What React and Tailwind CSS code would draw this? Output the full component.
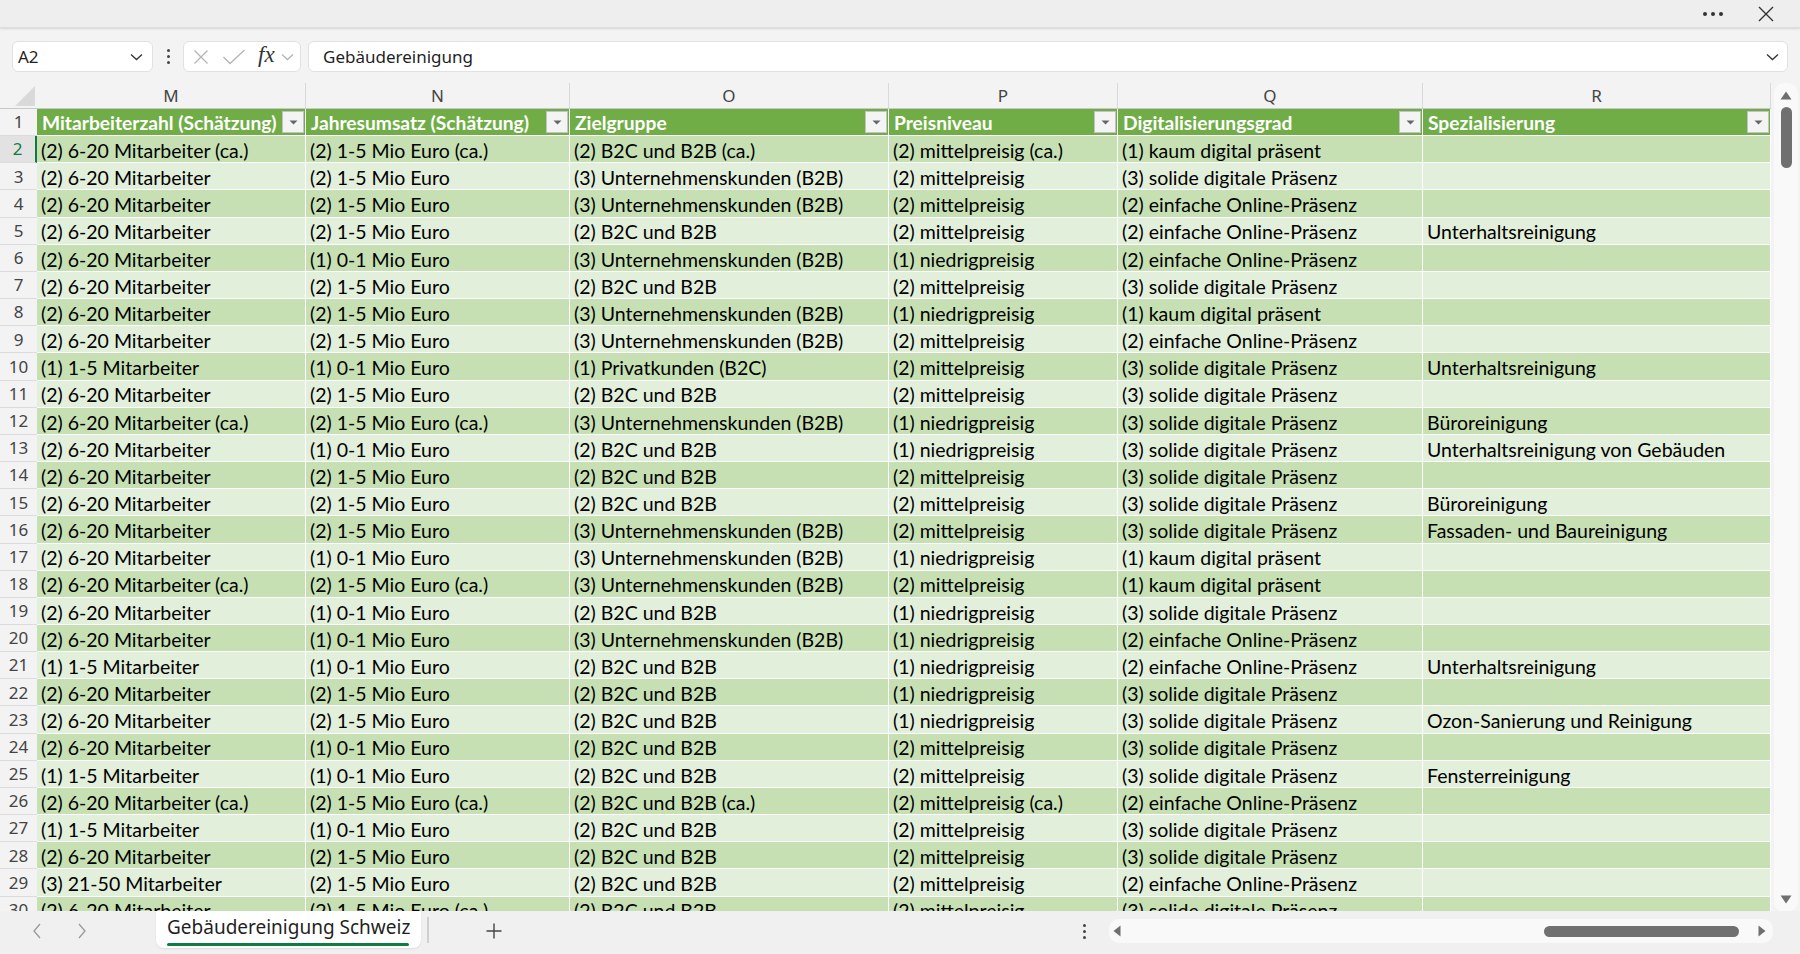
import React from "react";

const COLS = [
  { w: "w-[269px]", L: "M", h: "Mitarbeiterzahl (Schätzung)" },
  { w: "w-[264px]", L: "N", h: "Jahresumsatz (Schätzung)" },
  { w: "w-[319px]", L: "O", h: "Zielgruppe" },
  { w: "w-[229px]", L: "P", h: "Preisniveau" },
  { w: "w-[305px]", L: "Q", h: "Digitalisierungsgrad" },
  { w: "w-[348px]", L: "R", h: "Spezialisierung" },
];

const M1 = "(2) 6-20 Mitarbeiter";
const M1c = "(2) 6-20 Mitarbeiter (ca.)";
const M2 = "(1) 1-5 Mitarbeiter";
const M3 = "(3) 21-50 Mitarbeiter";
const N1 = "(2) 1-5 Mio Euro";
const N1c = "(2) 1-5 Mio Euro (ca.)";
const N0 = "(1) 0-1 Mio Euro";
const O1 = "(2) B2C und B2B";
const O1c = "(2) B2C und B2B (ca.)";
const OU = "(3) Unternehmenskunden (B2B)";
const OP = "(1) Privatkunden (B2C)";
const P2 = "(2) mittelpreisig";
const P2c = "(2) mittelpreisig (ca.)";
const P1 = "(1) niedrigpreisig";
const QK = "(1) kaum digital präsent";
const QS = "(3) solide digitale Präsenz";
const QE = "(2) einfache Online-Präsenz";

const ROWS = [
  [M1c, N1c, O1c, P2c, QK, ""],
  [M1, N1, OU, P2, QS, ""],
  [M1, N1, OU, P2, QE, ""],
  [M1, N1, O1, P2, QE, "Unterhaltsreinigung"],
  [M1, N0, OU, P1, QE, ""],
  [M1, N1, O1, P2, QS, ""],
  [M1, N1, OU, P1, QK, ""],
  [M1, N1, OU, P2, QE, ""],
  [M2, N0, OP, P2, QS, "Unterhaltsreinigung"],
  [M1, N1, O1, P2, QS, ""],
  [M1c, N1c, OU, P1, QS, "Büroreinigung"],
  [M1, N0, O1, P1, QS, "Unterhaltsreinigung von Gebäuden"],
  [M1, N1, O1, P2, QS, ""],
  [M1, N1, O1, P2, QS, "Büroreinigung"],
  [M1, N1, OU, P2, QS, "Fassaden- und Baureinigung"],
  [M1, N0, OU, P1, QK, ""],
  [M1c, N1c, OU, P2, QK, ""],
  [M1, N0, O1, P1, QS, ""],
  [M1, N0, OU, P1, QE, ""],
  [M2, N0, O1, P1, QE, "Unterhaltsreinigung"],
  [M1, N1, O1, P1, QS, ""],
  [M1, N1, O1, P1, QS, "Ozon-Sanierung und Reinigung"],
  [M1, N0, O1, P2, QS, ""],
  [M2, N0, O1, P2, QS, "Fensterreinigung"],
  [M1c, N1c, O1c, P2c, QE, ""],
  [M2, N0, O1, P2, QS, ""],
  [M1, N1, O1, P2, QS, ""],
  [M3, N1, O1, P2, QE, ""],
  [M1, N1c, O1, P2, QS, ""],
];

const UI = { fontFamily: '"Noto Sans", "Open Sans", sans-serif' };
const CELL = { fontFamily: 'Lato, "Noto Sans", sans-serif' };

function Chevron({ className = "" }) {
  return (
    <svg width="13" height="8" viewBox="0 0 13 8" className={className}>
      <path d="M1 1.5 L6.5 6.5 L12 1.5" fill="none" stroke="currentColor" strokeWidth="1.3" />
    </svg>
  );
}

function FilterBtn() {
  return (
    <div className="w-[22px] h-[22px] bg-[#f4f4f4] border border-[#c3c3c3] flex items-center justify-center shrink-0">
      <svg width="9" height="5" viewBox="0 0 9 5">
        <path d="M0.5 0.5 L8.5 0.5 L4.5 4.5 Z" fill="#666" />
      </svg>
    </div>
  );
}

export default function App() {
  return (
    <div className="w-[1800px] h-[954px] bg-[#f3f3f3] flex flex-col overflow-hidden" style={UI}>
      {/* Top bar */}
      <div className="h-[28px] bg-[#eeeeee] shadow-[0_1px_2px_rgba(0,0,0,0.12)] border-b border-[#dedede] flex items-center justify-end shrink-0 z-10">
        <div className="flex items-center gap-[4px] mr-[34px]">
          <span className="w-[4px] h-[4px] rounded-full bg-[#333]" />
          <span className="w-[4px] h-[4px] rounded-full bg-[#333]" />
          <span className="w-[4px] h-[4px] rounded-full bg-[#333]" />
        </div>
        <svg width="18" height="18" viewBox="0 0 18 18" className="mr-[25px]">
          <path d="M2 2 L16 16 M16 2 L2 16" stroke="#333" strokeWidth="1.4" />
        </svg>
      </div>

      {/* Formula bar */}
      <div className="h-[55px] flex items-start pt-[13px] pl-[12px] pr-[12px] shrink-0">
        <div className="w-[141px] h-[31px] bg-white rounded-[6px] border border-[#e1e1e1] flex items-center justify-between pl-[5px] pr-[9px]">
          <span className="text-[17px] text-[#1f1f1f]">A2</span>
          <Chevron className="text-[#333]" />
        </div>
        <div className="w-[30px] h-[31px] flex flex-col items-center justify-center gap-[3px]">
          <span className="w-[3px] h-[3px] rounded-full bg-[#444]" />
          <span className="w-[3px] h-[3px] rounded-full bg-[#444]" />
          <span className="w-[3px] h-[3px] rounded-full bg-[#444]" />
        </div>
        <div className="w-[118px] h-[31px] bg-white rounded-[6px] border border-[#e1e1e1] flex items-center pl-[9px]">
          <svg width="16" height="16" viewBox="0 0 16 16" className="shrink-0">
            <path d="M1.5 1.5 L14.5 14.5 M14.5 1.5 L1.5 14.5" stroke="#b4b4b4" strokeWidth="1.3" />
          </svg>
          <svg width="24" height="16" viewBox="0 0 24 16" className="ml-[13px] shrink-0">
            <path d="M1.5 8 L8 14.5 L22.5 1" fill="none" stroke="#b4b4b4" strokeWidth="1.3" />
          </svg>
          <span
            className="ml-[12px] text-[23px] italic text-[#333] leading-none -mt-[4px]"
            style={{ fontFamily: '"Liberation Serif", "DejaVu Serif", serif' }}
          >
            fx
          </span>
          <Chevron className="ml-[6px] text-[#b4b4b4] shrink-0" />
        </div>
        <div className="flex-1 ml-[7px] h-[31px] bg-white rounded-[6px] border border-[#e1e1e1] flex items-center justify-between pl-[14px] pr-[8px]">
          <span className="text-[17px] text-[#1f1f1f]">Gebäudereinigung</span>
          <Chevron className="text-[#333]" />
        </div>
      </div>

      {/* Main area */}
      <div className="h-[828px] flex shrink-0">
        <div className="w-[1771px] h-[828px] overflow-hidden flex flex-col">
          {/* Column letters */}
          <div className="h-[26px] flex shrink-0 border-b border-[#c8c8c8]">
            <div className="w-[37px] h-full flex items-end justify-end pr-[2px] pb-[2px]">
              <svg width="20" height="20" viewBox="0 0 20 20">
                <path d="M20 0 L20 20 L0 20 Z" fill="#d9d9d9" />
              </svg>
            </div>
            {COLS.map((c) => (
              <div
                key={c.L}
                className={`${c.w} h-full flex items-center justify-center text-[17px] text-[#444] border-r border-[#dadada] shrink-0`}
              >
                {c.L}
              </div>
            ))}
          </div>
          {/* Header row 1 */}
          <div className="h-[27.16px] flex shrink-0">
            <div className="w-[37px] h-full flex items-center justify-center text-[17px] text-[#444] border-b border-[#dcdcdc] shrink-0">
              1
            </div>
            {COLS.map((c) => (
              <div
                key={c.L}
                className={`${c.w} h-full bg-[#70ad47] border-r border-b border-white flex items-center justify-between pl-[5px] pr-[1px] shrink-0`}
              >
                <span className="text-[19.2px] font-bold text-white whitespace-nowrap leading-none pt-[2px]" style={CELL}>
                  {c.h}
                </span>
                <FilterBtn />
              </div>
            ))}
          </div>
          {/* Data rows */}
          {ROWS.map((r, i) => {
            const n = i + 2;
            const dark = n % 2 === 0;
            const sel = n === 2;
            return (
              <div key={n} className="h-[27.16px] flex shrink-0">
                <div
                  className={`w-[37px] h-full flex items-center justify-center text-[17px] border-b border-[#dcdcdc] shrink-0 ${
                    sel ? "bg-[#e2e2e2] text-[#107c41] border-r-2 border-r-[#107c41]" : "text-[#444]"
                  }`}
                >
                  {n}
                </div>
                {r.map((v, j) => (
                  <div
                    key={j}
                    className={`${COLS[j].w} h-full border-r border-b border-white flex items-center pl-[4px] pt-[3px] shrink-0 overflow-hidden ${
                      dark ? "bg-[#c6e0b4]" : "bg-[#e2efda]"
                    }`}
                  >
                    <span className="text-[19.5px] text-black whitespace-nowrap leading-none" style={CELL}>
                      {v}
                    </span>
                  </div>
                ))}
              </div>
            );
          })}
        </div>
        {/* Vertical scrollbar */}
        <div className="flex-1 pl-[3px] pr-[2px]">
          <div className="h-[829px] bg-[#f9f9f9] rounded-[10px] flex flex-col items-center">
            <svg width="12" height="9" viewBox="0 0 12 9" className="mt-[8px]">
              <path d="M6 0.5 L11.5 8.5 L0.5 8.5 Z" fill="#6f6f6f" />
            </svg>
            <div className="mt-[7px] w-[11px] h-[61px] rounded-full bg-[#707070]" />
            <div className="flex-1" />
            <svg width="12" height="9" viewBox="0 0 12 9" className="mb-[8px]">
              <path d="M0.5 0.5 L11.5 0.5 L6 8.5 Z" fill="#6f6f6f" />
            </svg>
          </div>
        </div>
      </div>

      {/* Sheet tab bar */}
      <div className="flex-1 flex items-start bg-[#f0f0f0] z-10">
        <div className="w-[156px] h-[40px] flex items-center pl-[32px]">
          <svg width="10" height="16" viewBox="0 0 10 16">
            <path d="M8 1 L2 8 L8 15" fill="none" stroke="#9a9a9a" strokeWidth="1.3" />
          </svg>
          <svg width="10" height="16" viewBox="0 0 10 16" className="ml-[35px]">
            <path d="M2 1 L8 8 L2 15" fill="none" stroke="#9a9a9a" strokeWidth="1.3" />
          </svg>
        </div>
        <div className="w-[265px] h-[37px] bg-white rounded-b-[8px] shadow-[0_1px_2px_rgba(0,0,0,0.08)] flex flex-col pl-[11px] pr-[12px]">
          <div className="h-[32px] flex items-center">
            <span className="text-[19px] text-[#1f1f1f] whitespace-nowrap">Gebäudereinigung Schweiz</span>
          </div>
          <div className="h-[3px] rounded-full bg-[#107c41]" />
        </div>
        <div className="ml-[6px] mt-[6px] w-[2px] h-[26px] bg-[#d0d0d0]" />
        <div className="ml-[57px] h-[40px] flex items-center">
          <svg width="16" height="16" viewBox="0 0 16 16">
            <path d="M8 0.5 L8 15.5 M0.5 8 L15.5 8" stroke="#444" strokeWidth="1.4" />
          </svg>
        </div>
        <div className="flex-1" />
        <div className="w-[10px] h-[40px] flex flex-col items-center justify-center gap-[3px]">
          <span className="w-[3px] h-[3px] rounded-full bg-[#444]" />
          <span className="w-[3px] h-[3px] rounded-full bg-[#444]" />
          <span className="w-[3px] h-[3px] rounded-full bg-[#444]" />
        </div>
        <div className="ml-[20px] mt-[8px] w-[664px] h-[24px] mr-[27px] bg-[#f9f9f9] rounded-[10px] flex items-center pl-[4px] pr-[7px]">
          <svg width="8" height="12" viewBox="0 0 8 12">
            <path d="M7.5 0.5 L7.5 11.5 L0.5 6 Z" fill="#6f6f6f" />
          </svg>
          <div className="flex-1" />
          <div className="w-[195px] h-[11px] rounded-full bg-[#707070]" />
          <svg width="8" height="12" viewBox="0 0 8 12" className="ml-[19px]">
            <path d="M0.5 0.5 L0.5 11.5 L7.5 6 Z" fill="#6f6f6f" />
          </svg>
        </div>
      </div>
    </div>
  );
}
